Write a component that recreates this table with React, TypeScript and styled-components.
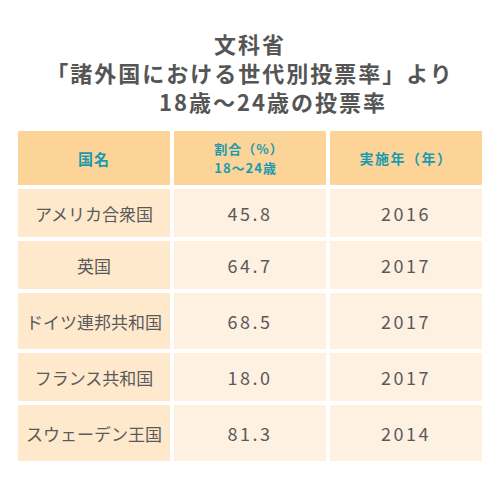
import { FC, Fragment } from 'react';
import styled, { createGlobalStyle } from 'styled-components';

const COL_WIDTH = 152;

const GlobalStyle = createGlobalStyle`
  html, body {
    margin: 0;
    padding: 0;
    background: #fff;
  }
  body {
    font-family: "Noto Sans CJK JP", "Noto Sans", sans-serif;
  }
`;

const Page = styled.div`
  width: 500px;
  height: 500px;
  padding-top: 29px;
  box-sizing: border-box;
`;

const Title = styled.h1`
  margin: 0 0 15px;
  display: flex;
  flex-direction: column;
  align-items: center;
  font-size: 22px;
  line-height: 29px;
  font-weight: 700;
  color: #555;
  letter-spacing: 2px;
`;

const TitleLine = styled.span<{ $indent?: number }>`
  padding-left: ${(p) => p.$indent ?? 0}px;
`;

const Table = styled.div`
  display: grid;
  grid-template-columns: repeat(3, ${COL_WIDTH}px);
  grid-template-rows: 54px 48px 48px 56px 48px 56px;
  gap: 4px;
  margin-left: 18px;
`;

const HeadCell = styled.div`
  display: flex;
  align-items: center;
  justify-content: center;
  background: #fcd497;
  color: #1a9ab0;
  font-weight: 700;
  font-size: 14px;
  letter-spacing: 1.5px;
`;

const HeadName = styled.span`
  font-size: 15px;
  letter-spacing: 1px;
`;

const HeadStack = styled.div`
  display: flex;
  flex-direction: column;
  align-items: flex-start;
  font-size: 13px;
  line-height: 19px;
  letter-spacing: 1px;
  padding-right: 2px;
`;

const Cell = styled.div<{ $name?: boolean }>`
  display: flex;
  align-items: center;
  justify-content: center;
  background: ${(p) => (p.$name ? '#fee9cd' : '#fef1e2')};
  color: #5a5a5a;
  font-size: ${(p) => (p.$name ? 17 : 18)}px;
  letter-spacing: ${(p) => (p.$name ? 0 : 2.5)}px;
`;

const rows = [
  { name: 'アメリカ合衆国', rate: '45.8', year: '2016' },
  { name: '英国', rate: '64.7', year: '2017' },
  { name: 'ドイツ連邦共和国', rate: '68.5', year: '2017' },
  { name: 'フランス共和国', rate: '18.0', year: '2017' },
  { name: 'スウェーデン王国', rate: '81.3', year: '2014' },
];

const App: FC = () => (
  <Page>
    <GlobalStyle />
    <Title>
      <TitleLine>文科省</TitleLine>
      <TitleLine>「諸外国における世代別投票率」より</TitleLine>
      <TitleLine $indent={46}>18歳〜24歳の投票率</TitleLine>
    </Title>
    <Table>
      <HeadCell>
        <HeadName>国名</HeadName>
      </HeadCell>
      <HeadCell>
        <HeadStack>
          <span>割合（%）</span>
          <span>18〜24歳</span>
        </HeadStack>
      </HeadCell>
      <HeadCell>実施年（年）</HeadCell>
      {rows.map((r) => (
        <Fragment key={r.name}>
          <Cell $name>{r.name}</Cell>
          <Cell>{r.rate}</Cell>
          <Cell>{r.year}</Cell>
        </Fragment>
      ))}
    </Table>
  </Page>
);

export default App;
